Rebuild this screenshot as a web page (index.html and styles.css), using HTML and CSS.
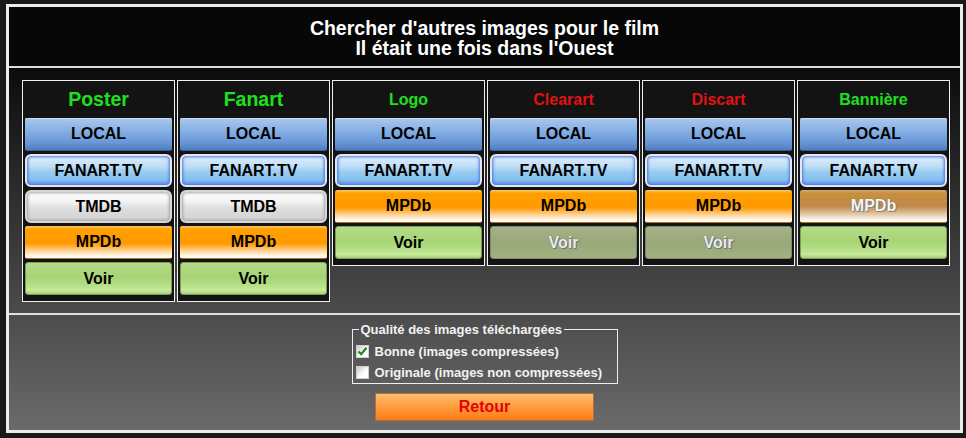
FILE: index.html
```html
<html>
<head>
    <meta charset="utf-8">
    <link rel="stylesheet" href="styles.css">
</head>

<body>

<div class="dialog">
    <div class="header">
        <div class="title">Chercher d'autres images pour le film<br>Il était une fois dans l'Ouest</div>
    </div>

    <div class="main">
        <div class="columns">
            <div class="col">
                <div class="col-title big ok">Poster</div>
                <div class="btn local">LOCAL</div>
                <div class="btn fanart">FANART.TV</div>
                <div class="btn tmdb">TMDB</div>
                <div class="btn mpdb">MPDb</div>
                <div class="btn voir">Voir</div>
            </div>
            <div class="col">
                <div class="col-title big ok">Fanart</div>
                <div class="btn local">LOCAL</div>
                <div class="btn fanart">FANART.TV</div>
                <div class="btn tmdb">TMDB</div>
                <div class="btn mpdb">MPDb</div>
                <div class="btn voir">Voir</div>
            </div>
            <div class="col">
                <div class="col-title ok">Logo</div>
                <div class="btn local">LOCAL</div>
                <div class="btn fanart">FANART.TV</div>
                <div class="btn mpdb">MPDb</div>
                <div class="btn voir">Voir</div>
            </div>
            <div class="col">
                <div class="col-title missing">Clearart</div>
                <div class="btn local">LOCAL</div>
                <div class="btn fanart">FANART.TV</div>
                <div class="btn mpdb">MPDb</div>
                <div class="btn voir off">Voir</div>
            </div>
            <div class="col">
                <div class="col-title missing">Discart</div>
                <div class="btn local">LOCAL</div>
                <div class="btn fanart">FANART.TV</div>
                <div class="btn mpdb">MPDb</div>
                <div class="btn voir off">Voir</div>
            </div>
            <div class="col">
                <div class="col-title ok">Bannière</div>
                <div class="btn local">LOCAL</div>
                <div class="btn fanart">FANART.TV</div>
                <div class="btn mpdb off">MPDb</div>
                <div class="btn voir">Voir</div>
            </div>
        </div>

        <div class="sep"></div>

        <fieldset class="quality">
            <legend>Qualité des images téléchargées</legend>
            <div class="opt">
                <span class="box"><svg width="11" height="11" viewBox="0 0 11 11"><path d="M1.5 5.5 L4.2 8.2 L9.5 1.8" fill="none" stroke="#188a18" stroke-width="2.2"/></svg></span>
                Bonne (images compressées)
            </div>
            <div class="opt">
                <span class="box"></span>
                Originale (images non compressées)
            </div>
        </fieldset>

        <div class="retour">Retour</div>
    </div>
</div>

</body>
</html>
```

FILE: styles.css
```css
body { margin: 0; background: #181818; font-family: "Liberation Sans", Arial, sans-serif; }

.dialog { margin: 4px 0 0 6px; width: 951px; height: 423px; border: 3px solid #ececec; }

.header { height: 56px; padding-top: 3px; background: #070707; border-bottom: 2px solid #dcdcdc; display: flex; align-items: center; justify-content: center; }
.title { color: #fff; font-weight: bold; font-size: 19.5px; line-height: 20px; text-align: center; }

.main { height: 362px; background: linear-gradient(#0c0c0c, #6a6a6a); }

.columns { display: flex; align-items: flex-start; gap: 2px; padding: 12px 0 0 13px; height: 222px; }
.col { width: 147px; padding: 0 2px 6px; border: 1px solid #f0f0f0; background: #131313; }
.col-title { height: 37px; display: flex; align-items: center; justify-content: center; font-weight: bold; font-size: 16px; }
.col-title.big { font-size: 19.5px; }
.ok { color: #1ee01e; }
.missing { color: #e01212; }

.btn { height: 33px; margin-bottom: 3px; box-sizing: border-box; display: flex; align-items: center; justify-content: center; font-weight: bold; font-size: 16px; color: #000; }
.btn:last-child { margin-bottom: 0; }

.local { border-radius: 2px; border-bottom: 1px solid #3a5f98; background: linear-gradient(#a8c8ee, #86b0e4 40%, #6a98d8 75%, #4e7cc0); box-shadow: inset 0 1px 0 #cadcf4; }
.fanart { border: 2px solid #e2e6ee; border-radius: 6px; background: linear-gradient(#e0eefc, #c0def6 35%, #98ccf0 55%, #86c2ee 80%, #6c9cf0); box-shadow: inset 0 0 3px 1px #4a74e6; }
.tmdb { border: 2px solid #d6d6d6; border-radius: 6px; background: linear-gradient(#ffffff, #f2f2f2 35%, #dedede 55%, #d2d2d2); box-shadow: inset 0 0 3px 1px #a4a4a4; }
.mpdb { border-radius: 2px; border-bottom: 1px solid #b0701c; background: linear-gradient(#ffc870, #ffa000 10%, #ff9a00 55%, #ffd49a 78%, #fffaf2 94%); }
.mpdb.off { background: linear-gradient(#dca868, #c8903e 10%, #c08848 50%, #e6ceb0 78%, #fffaf6 94%); color: #f6f6f6; text-shadow: 0 0 1px #555, 1px 1px 0 #8a8a8a; }
.voir { border: 1px solid #7c9e58; border-radius: 3px; background: linear-gradient(#b4dc88, #a6d474 45%, #b4de86 70%, #c6ea9a 88%, #a8d078); }
.voir.off { border-color: #7e8a64; background: linear-gradient(#a6b28a, #98a878 50%, #a2b082); color: #ececec; text-shadow: 0 0 1px #555, 1px 1px 0 #777; }

.sep { height: 2px; margin-top: 11px; background: #e0e0e0; }

.quality { width: 266px; box-sizing: border-box; margin: 7px auto 0; padding: 4px 0 0 3px; border: 1px solid #eeeeee; color: #f2f2f2; font-weight: bold; font-size: 13px; }
.quality legend { padding: 0 2px; margin-left: 3px; line-height: 15px; }
.opt { height: 21px; display: flex; align-items: center; }
.box { width: 11px; height: 11px; margin-right: 6px; border: 1px solid #cfcfcf; background: linear-gradient(135deg, #c8c8c8, #ffffff 60%); display: flex; }

.retour { width: 219px; height: 28px; margin: 9px auto 0; box-sizing: border-box; border: 1px solid #b07038; background: linear-gradient(#ffbe70, #ff9c3e 50%, #ff7a14); display: flex; align-items: center; justify-content: center; color: #e80000; font-weight: bold; font-size: 16px; }
```
